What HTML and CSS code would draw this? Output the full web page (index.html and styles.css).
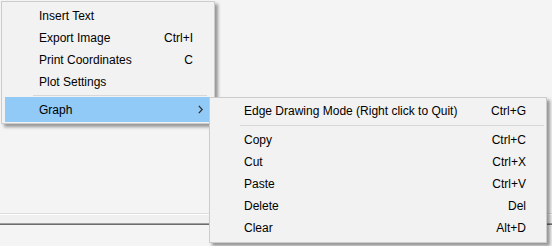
FILE: index.html
```html
<!DOCTYPE html>
<html>
<head>
<meta charset="utf-8">
<link rel="stylesheet" href="styles.css">
</head>
<body>
<div class="app">
  <div class="canvas"></div>
  <div class="panel-edge"></div>
  <div class="panel-line"></div>

  <div class="menu main">
    <div class="item"><span>Insert Text</span></div>
    <div class="item"><span>Export Image</span><span>Ctrl+I</span></div>
    <div class="item"><span>Print Coordinates</span><span>C</span></div>
    <div class="item"><span>Plot Settings</span></div>
    <div class="sep"></div>
    <div class="item active"><span>Graph</span>
      <svg class="arrow" width="5" height="9" viewBox="0 0 5 9"><path d="M0.8 0.8 L4.2 4.5 L0.8 8.2" fill="none" stroke="#2b2b2b" stroke-width="1.2"/></svg>
    </div>
  </div>

  <div class="menu sub">
    <div class="item"><span>Edge Drawing Mode (Right click to Quit)</span><span>Ctrl+G</span></div>
    <div class="sep"></div>
    <div class="item"><span>Copy</span><span>Ctrl+C</span></div>
    <div class="item"><span>Cut</span><span>Ctrl+X</span></div>
    <div class="item"><span>Paste</span><span>Ctrl+V</span></div>
    <div class="item"><span>Delete</span><span>Del</span></div>
    <div class="item"><span>Clear</span><span>Alt+D</span></div>
  </div>
</div>
</body>
</html>
```

FILE: styles.css
```css
html, body {
  margin: 0;
  padding: 0;
}
body {
  background: #f4f4f4;
  font: 12px "Liberation Sans", Arial, sans-serif;
  color: #000;
}
.app {
  position: relative;
  width: 552px;
  height: 246px;
  overflow: hidden;
}
.canvas {
  height: 213px;
}
.panel-edge {
  height: 9px;
  border-top: 1px solid #dcdcdc;
  background: linear-gradient(#ffffff 0 1px, #f0f0f0 1px);
}
.panel-line {
  height: 1px;
  background: #a0a0a0;
  border-bottom: 1px solid #6d6d6d;
}
.menu {
  position: absolute;
  box-sizing: border-box;
  background: #f2f2f2;
  border: 1px solid #cccccc;
  box-shadow: 3px 3px 3px rgba(0, 0, 0, 0.38);
}
.main {
  left: 1px;
  top: 1px;
  width: 214px;
  height: 123px;
  padding: 3px 3px 1px;
}
.sub {
  left: 209px;
  top: 97px;
  width: 338px;
  height: 146px;
  padding: 2px 3px 3px;
}
.item {
  height: 22px;
  display: flex;
  align-items: center;
  justify-content: space-between;
  white-space: nowrap;
}
.main .item {
  padding: 0 18px 0 34px;
}
.sub .item {
  padding: 0 17px 0 31px;
}
.main .item.active {
  height: 25px;
  background: #91c9f7;
  padding-right: 8px;
}
.arrow {
  display: block;
}
.main .sep {
  height: 1px;
  margin: 2px 4px 1px 28px;
  background: #d7d7d7;
}
.sub .sep {
  height: 1px;
  margin: 3px -1px 3px 27px;
  background: #d7d7d7;
}
```
